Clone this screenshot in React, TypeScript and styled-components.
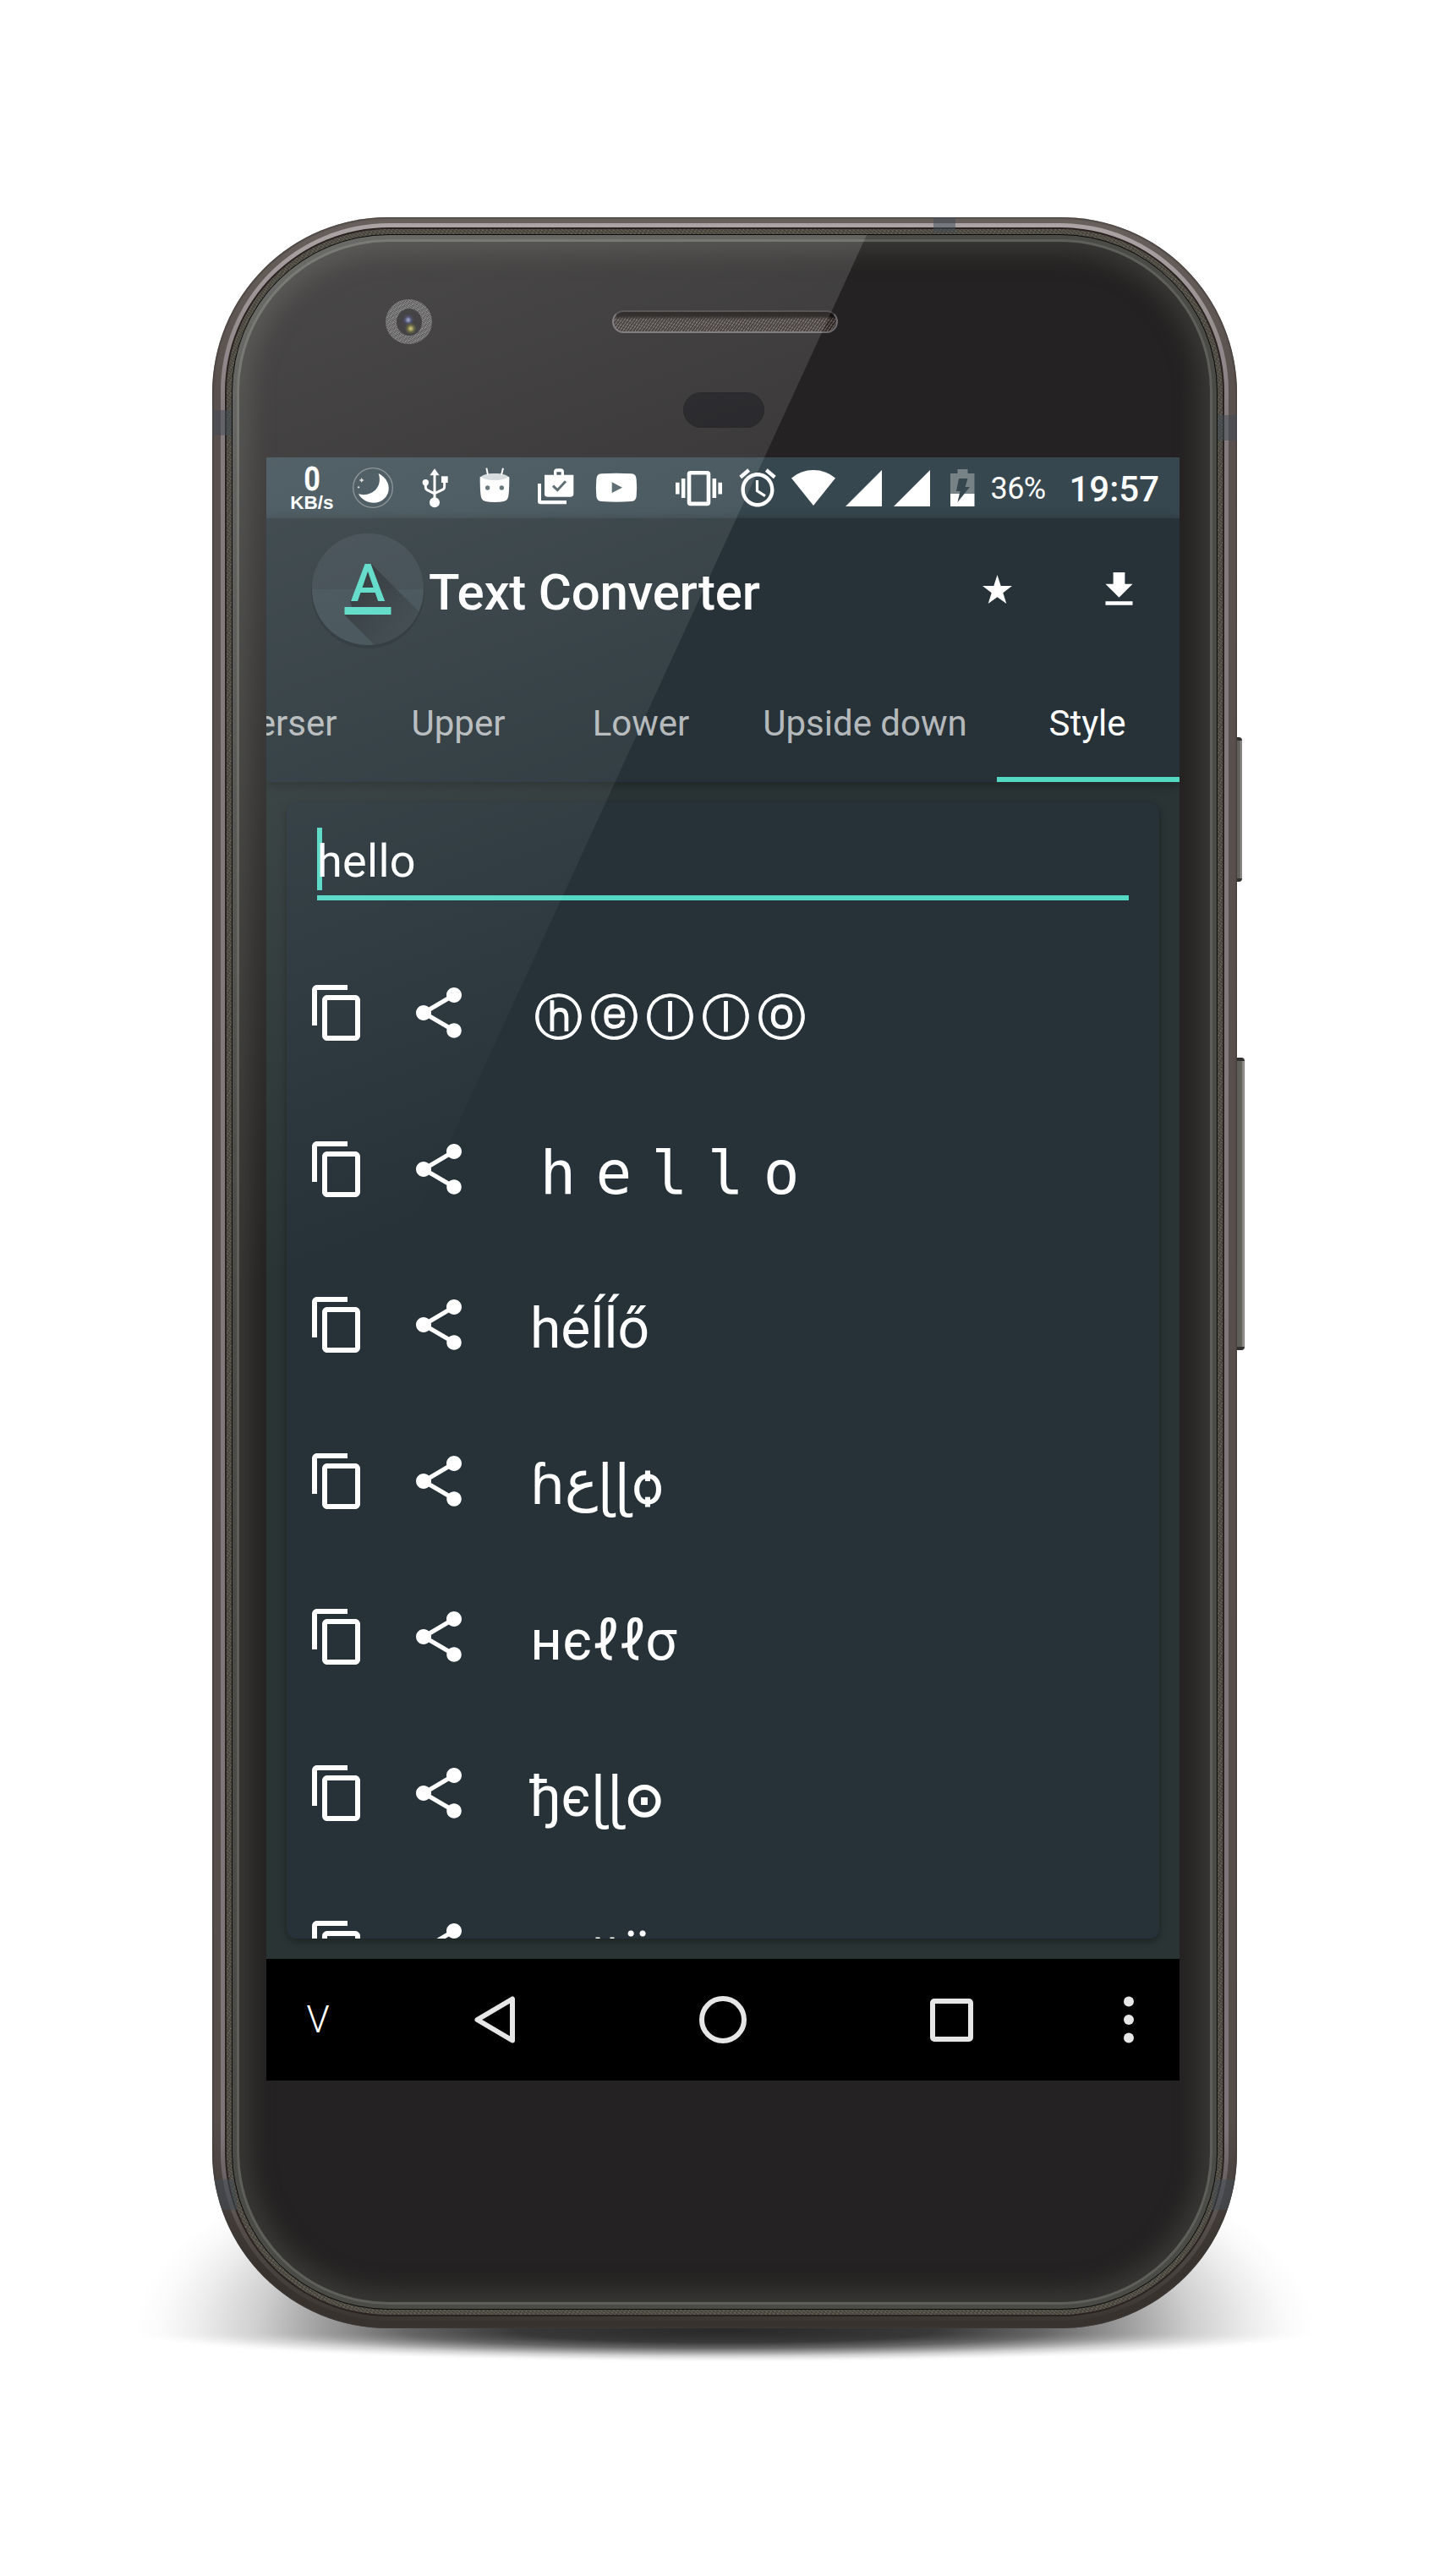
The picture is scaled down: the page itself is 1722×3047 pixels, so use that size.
import React from "react";
import styled, { createGlobalStyle } from "styled-components";

const ACCENT = "#53d8c4";

const GlobalStyle = createGlobalStyle`
  *, *::before, *::after { box-sizing: border-box; }
  html, body { margin: 0; padding: 0; background: #fff; }
  body { font-family: Roboto, "Noto Sans", "DejaVu Sans", sans-serif; color: #fff; }
  svg { display: block; flex: none; }
`;

/* ---------- device ---------- */

const Stage = styled.main`
  width: 1722px;
  height: 3047px;
  padding: 257px 0 0 251px;
  overflow: hidden;
  background: #fff;
`;

const Device = styled.div`
  position: relative;
  width: 1212px;
  height: 2497px;
`;

const GroundShadow = styled.div`
  position: absolute;
  left: -94px;
  width: 1400px;
`;

const shadowStops =
  "rgba(0,0,0,.84) 0%, rgba(0,0,0,.78) 35%, rgba(0,0,0,.6) 54%, rgba(0,0,0,.38) 68%, rgba(0,0,0,.19) 79%, rgba(0,0,0,.07) 89%, rgba(0,0,0,.02) 95%, transparent 100%";

const ShadowAbove = styled(GroundShadow)`
  bottom: -4px;
  height: 270px;
  background: radial-gradient(ellipse 700px 270px at 50% 100%, ${shadowStops});
`;

const ShadowBelow = styled(GroundShadow)`
  bottom: -40px;
  height: 36px;
  background: radial-gradient(ellipse 700px 36px at 50% 0%, ${shadowStops});
`;

const SideButton = styled.div<{ $top: number; $height: number; $width: number }>`
  position: absolute;
  left: 1209px;
  top: ${(p) => p.$top}px;
  width: ${(p) => p.$width}px;
  height: ${(p) => p.$height}px;
  border-radius: 0 4px 4px 0;
  background: linear-gradient(90deg, #3a3735 0, #5d5e57 30%, #63645c 70%, #a09c9e 88%, #6c6869 100%);
  border-top: 4px solid #34322f;
  border-bottom: 4px solid #34322f;
`;

const Rail = styled.div`
  position: relative;
  width: 1212px;
  height: 2497px;
  padding: 7px 10px 9px;
  border-radius: 208px;
  overflow: hidden;
  background: linear-gradient(180deg, #67605c 0, #5a514e 8%, #564d4b 90%, #38332f 97%, #37322e 100%);
  box-shadow: inset 0 0 2px 1px #3f3936;
`;

const Highlight = styled.div`
  height: 100%;
  padding: 5px;
  border-radius: 199px;
  background: linear-gradient(180deg, #aaa5a4 0, #857c7f 9%, #7e757a 91%, #504b48 96%, #3a3632 100%);
`;

const Groove = styled.div`
  height: 100%;
  padding: 2px;
  border-radius: 194px;
  background: #2a2220;
`;

const Texture = styled.div`
  height: 100%;
  padding: 6px;
  border-radius: 192px;
  background:
    repeating-linear-gradient(37deg, rgba(255,255,240,.06) 0 1px, rgba(0,0,0,.1) 1px 3px),
    repeating-linear-gradient(121deg, rgba(255,255,240,.05) 0 1px, rgba(0,0,0,.08) 1px 4px),
    #56534a;
`;

const Face = styled.div`
  position: relative;
  height: 100%;
  border-radius: 186px;
  overflow: hidden;
  background: #242222;
  border: 1px solid #0e0c0b;
  box-shadow: inset 0 0 0 5px #4a4a47, inset 0 0 0 8px #5e5e5a, inset 0 0 26px 22px #393836;
  padding: 263px 0 0 40px;
`;

const Antenna = styled.div<{ $x: number; $y: number; $w: number; $h: number; $skew?: number }>`
  position: absolute;
  left: ${(p) => p.$x}px;
  top: ${(p) => p.$y}px;
  width: ${(p) => p.$w}px;
  height: ${(p) => p.$h}px;
  transform: skewX(${(p) => p.$skew ?? 0}deg);
  background: rgba(66, 76, 86, 0.5);
`;

const Gloss = styled.div`
  position: absolute;
  left: 0;
  top: 0;
  width: 750px;
  height: 1631px;
  pointer-events: none;
  clip-path: polygon(0 0, 100% 0, 0 100%);
  background: linear-gradient(160deg, rgba(255,255,255,.18) 0, rgba(255,255,255,0) 1180px);
`;

/* ---------- sensors laid over the bezel ---------- */

const Camera = styled.div`
  position: absolute;
  left: 181px;
  top: 76px;
  width: 55px;
  height: 53px;
  border-radius: 50%;
  display: grid;
  place-items: center;
  background:
    repeating-linear-gradient(37deg, rgba(255,255,255,.12) 0 1px, rgba(0,0,0,.12) 1px 2px),
    repeating-linear-gradient(120deg, rgba(255,255,255,.1) 0 1px, rgba(0,0,0,.1) 1px 3px),
    #565454;
`;

const Lens = styled.div`
  width: 30px;
  height: 32px;
  border-radius: 50%;
  background:
    radial-gradient(circle at 56% 74%, #b9ad5c 0 1px, #4c4a22 4px, transparent 7px),
    radial-gradient(circle at 46% 42%, #8088b5 0 1px, #2c2f4c 4px, transparent 7px),
    #232124;
`;

const Speaker = styled.div`
  position: absolute;
  left: 449px;
  top: 89px;
  width: 267px;
  height: 27px;
  border-radius: 14px;
  border: 2px solid #6f6c70;
  border-top-color: #3f3c3e;
  background:
    linear-gradient(180deg, #0e0b09 0, #15110f 5px, transparent 9px),
    repeating-linear-gradient(125deg, #655f5c 0 1px, #322b29 1px 3px);
`;

const Proximity = styled.div`
  position: absolute;
  left: 533px;
  top: 186px;
  width: 96px;
  height: 42px;
  border-radius: 21px;
  background: #0f0f13;
  border: 1px solid #0c0b0d;
`;

/* ---------- screen ---------- */

const Screen = styled.div`
  width: 1080px;
  height: 1920px;
  display: flex;
  flex-direction: column;
  overflow: hidden;
  background: #2a3434;
`;

const StatusBar = styled.div`
  height: 72px;
  flex: none;
  display: flex;
  align-items: center;
  padding-left: 18px;
  background: #37474f;
`;

const Speed = styled.div`
  width: 72px;
  height: 72px;
  padding-top: 7px;
  display: flex;
  flex-direction: column;
  align-items: center;
  font-weight: 700;
`;

const SpeedValue = styled.span`
  font-size: 39px;
  line-height: 38px;
  font-weight: 500;
  -webkit-text-stroke: 0.8px #fff;
  transform: scaleX(0.86);
`;

const SpeedUnit = styled.span`
  font-family: "Liberation Sans", Arial, sans-serif;
  font-size: 22.5px;
  line-height: 18px;
`;

const StatusIcons = styled.div`
  display: flex;
  align-items: center;
  margin-left: 34px;
  & > svg { margin-right: 14px; }
`;

const Battery = styled.span`
  margin-left: 19px;
  font-size: 36px;
  line-height: 72px;
  letter-spacing: -0.6px;
  padding-top: 2px;
`;

const Clock = styled.span`
  margin-left: auto;
  padding: 3px 24px 0 0;
  font-size: 42px;
  line-height: 72px;
  font-weight: 500;
`;

const AppBar = styled.header`
  position: relative;
  height: 312px;
  flex: none;
  background: #263238;
  box-shadow: 0 2px 12px rgba(0, 0, 0, 0.35);
`;

const Toolbar = styled.div`
  height: 168px;
  display: flex;
  align-items: center;
  padding-left: 48px;
`;

const Title = styled.h1`
  margin: 0 auto 0 0;
  padding-top: 7px;
  font-size: 60px;
  line-height: 70px;
  font-weight: 500;
  letter-spacing: -0.25px;
  white-space: nowrap;
`;

const Action = styled.button`
  width: 144px;
  height: 144px;
  padding: 0;
  border: 0;
  background: none;
  display: grid;
  place-items: center;
  color: #fff;
`;

const Tabs = styled.nav`
  height: 144px;
  display: grid;
  grid-template-columns: 120px 216px 216px 312px 216px;
`;

const Tab = styled.div<{ $active?: boolean; $clipped?: boolean; $wide?: boolean }>`
  display: flex;
  align-items: center;
  justify-content: ${(p) => (p.$clipped ? "flex-end" : "center")};
  padding-right: ${(p) => (p.$clipped ? 36.5 : p.$wide ? 0 : 2)}px;
  padding-top: ${(p) => (p.$active ? 10 : 4)}px;
  overflow: hidden;
  white-space: nowrap;
  font-size: 42px;
  color: ${(p) => (p.$active ? "#fff" : "rgba(255,255,255,.68)")};
  border-bottom: ${(p) => (p.$active ? `6px solid ${ACCENT}` : "0")};
`;

const Content = styled.section`
  flex: 1;
  min-height: 0;
  padding: 24px;
`;

const Card = styled.div`
  height: 1344px;
  padding-top: 30px;
  border-radius: 12px;
  overflow: hidden;
  background: #263238;
`;

const CardShadow = styled.div`
  border-radius: 12px;
  box-shadow: 0 3px 9px rgba(0, 0, 0, 0.35);
`;

const Field = styled.div`
  height: 86px;
  margin: 0 36px 40.75px;
  display: flex;
  align-items: flex-start;
  border-bottom: 6px solid ${ACCENT};
  font-size: 54px;
  line-height: 76px;
`;

const Caret = styled.i`
  width: 6px;
  height: 74px;
  margin-right: -6px;
  background: ${ACCENT};
`;

const FieldText = styled.span`
  position: relative;
  padding-top: 2px;
  letter-spacing: 0.3px;
`;

const Row = styled.div`
  height: 184.5px;
  display: flex;
  align-items: center;
  padding-left: 24px;
  & > svg + svg { margin-left: 48px; }
`;

const Styled = styled.div`
  margin-left: 72px;
  padding-top: 10px;
  height: 90px;
  font-size: 66px;
  line-height: 80px;
  white-space: nowrap;
`;

const Circled = styled.span`
  display: grid;
  grid-template-columns: repeat(5, 66px);
  justify-items: center;
  font-family: "DejaVu Sans", sans-serif;
  font-size: 57px;
  line-height: 80px;
  -webkit-text-stroke: 1px #fff;
`;

const Wide = styled.span`
  font-family: "DejaVu Sans Mono", monospace;
  font-size: 71px;
  letter-spacing: 23.3px;
  padding-left: 11.5px;
`;

const Raised = styled.span`
  font-family: "DejaVu Sans", sans-serif;
  line-height: 0;
  vertical-align: 5px;
`;

const Tails = styled.span`
  letter-spacing: 3px;
`;

const Target = styled.span`
  font-family: "DejaVu Sans", sans-serif;
  font-size: 56px;
  line-height: 0;
  -webkit-text-stroke: 2px #fff;
`;

const Short = styled.span`
  font-size: 53.5px;
  letter-spacing: 4px;
`;

const NavBar = styled.footer`
  height: 144px;
  flex: none;
  display: grid;
  grid-template-columns: 135px 270px 270px 270px 135px;
  background: #000;
`;

const NavCell = styled.div<{ $left?: number; $right?: number }>`
  display: grid;
  place-items: center;
  padding-left: ${(p) => p.$left ?? 0}px;
  padding-right: ${(p) => p.$right ?? 0}px;
  font-size: 44px;
  font-weight: 300;
`;

/* ---------- drawings ---------- */

const Cell = ({ n, children }: { n: number; children: React.ReactNode }) => (
  <svg width="72" height="72" viewBox={`${270 + 216 * n} 0 216 216`} fill="#fff">
    {children}
  </svg>
);

const Notifications = () => (
  <>
    <Cell n={0}>
      <circle cx="378" cy="108" r="70" fill="none" stroke="#fff" strokeOpacity=".35" strokeWidth="4" />
      <path d="M398 57c38 18 48 62 22 88-26 27-74 20-93-15 44 12 88-22 71-73z" />
      <path d="M338 72l3 6 6 3-6 3-3 6-3-6-6-3 6-3zM327 102l5 4-5 4-4-4z" opacity=".8" />
    </Cell>
    <Cell n={1}>
      <path d="M597 40l17 24h-34z" />
      <circle cx="597" cy="160" r="18" />
      <circle cx="565" cy="89" r="11" />
      <path d="M621 67h23v23h-23z" />
      <path d="M597 60v90M565 90v16q0 8 8 11l24 12M632 88v16q0 8-8 11l-27 13" fill="none" stroke="#fff" strokeWidth="9" />
    </Cell>
    <Cell n={2}>
      <path d="M758 70q0 68 6 76 4 13 46 13t46-13q6-8 6-76-52-24-104 0z" />
      <ellipse cx="810" cy="69" rx="46" ry="12" fill="#d3d8da" />
      <path d="M781 38l5 24M840 38l-6 24" stroke="#fff" strokeWidth="6" fill="none" />
      <circle cx="785" cy="108" r="8" fill="#54666d" />
      <circle cx="835" cy="108" r="8" fill="#54666d" />
    </Cell>
    <Cell n={3}>
      <path d="M963 93h12v60h90v13h-92q-10 0-10-10z" />
      <path fillRule="evenodd" d="M987 62h33v-10q0-12 12-12h12q12 0 12 12v10h34v68q0 10-10 10h-83q-10 0-10-10zm43 0h16v-10h-16z" />
      <path d="M1017 101l16 15 29-31" fill="none" stroke="#4a5c63" strokeWidth="9" />
    </Cell>
    <Cell n={4}>
      <path d="M1188 58q54-4 108 0 16 1 17 20 3 30 0 60-1 17-17 18-54 4-108 0-16-1-17-18-3-30 0-60 1-19 17-20z" />
      <path d="M1226 88v38l37-19z" fill="#4a5c63" />
    </Cell>
  </>
);

const VibrationIcon = () => (
  <svg width="55" height="55" viewBox="0 0 24 24" fill="#fff" style={{ marginRight: 16 }}>
    <path d="M0 15h2V9H0v6zm3 2h2V7H3v10zm19-8v6h2V9h-2zm-3 8h2V7h-2v10zM16.5 3h-9C6.67 3 6 3.67 6 4.5v15c0 .83.67 1.5 1.5 1.5h9c.83 0 1.5-.67 1.5-1.5v-15c0-.83-.67-1.5-1.5-1.5zM16 19H8V5h8v14z" />
  </svg>
);

const AlarmIcon = () => (
  <svg width="52" height="54" viewBox="0 0 24 24" fill="#fff" preserveAspectRatio="none">
    <path d="M22 5.72l-4.6-3.86-1.29 1.53 4.6 3.86L22 5.72zM7.88 3.39L6.6 1.86 2 5.71l1.29 1.53 4.59-3.85zM12.5 8H11v6l4.75 2.85.75-1.23-4-2.37V8zM12 4c-4.97 0-9 4.03-9 9s4.02 9 9 9c4.97 0 9-4.03 9-9s-4.03-9-9-9zm0 16c-3.87 0-7-3.13-7-7s3.13-7 7-7 7 3.13 7 7-3.13 7-7 7z" />
  </svg>
);

const WifiIcon = () => (
  <svg width="52" height="42" viewBox="0 0 52 42" fill="#fff" style={{ marginRight: 11.5 }}>
    <path d="M26 42L0 9.500Q11 0 26 0t26 9.500z" />
  </svg>
);

const SignalIcon = ({ gap = 14 }: { gap?: number }) => (
  <svg width="43" height="43" viewBox="0 0 43 43" fill="#fff" style={{ marginRight: gap }}>
    <path d="M43 0v43H0z" />
  </svg>
);

const BatteryIcon = () => (
  <svg width="28.500" height="44" viewBox="0 0 28.500 44" style={{ marginRight: 0 }}>
    <path d="M8.500 0h12v5h8v24H0V5h8.500z" fill="#fff" opacity=".32" />
    <path d="M0 29h28.500v15H0z" fill="#fff" />
    <path d="M10 11h10.500l-3 10h5.500L8.500 39l3-13H7z" fill="#37474f" />
  </svg>
);

const Logo = () => (
  <svg width="144" height="144" viewBox="-6 -6 144 144">
    <defs>
      <clipPath id="disc">
        <circle cx="66" cy="66" r="66" />
      </clipPath>
      <linearGradient id="fall" x1="0" y1="0" x2="1" y2="1">
        <stop offset="0.15" stopColor="#1b2022" stopOpacity=".85" />
        <stop offset="0.85" stopColor="#2b363c" stopOpacity=".6" />
      </linearGradient>
    </defs>
    <circle cx="66" cy="69" r="67" fill="#000" opacity=".16" />
    <circle cx="66" cy="66" r="66" fill="#37464d" />
    <g clipPath="url(#disc)">
      <path d="M0 0h132v66H0z" fill="#333f46" />
      <path d="M70 36l60 60v40H78L38 96l10-6-3-10z" fill="url(#fall)" />
    </g>
    <path d="M38.500 87h55v9h-55z" fill={ACCENT} />
    <text x="66" y="80" textAnchor="middle" fontFamily="Roboto, sans-serif" fontWeight="500" fontSize="62" fill={ACCENT}>
      A
    </text>
  </svg>
);

const CopyIcon = () => (
  <svg width="72" height="72" viewBox="0 0 24 24" fill="#fff">
    <path d="M16 1H4c-1.100 0-2 .9-2 2v14h2V3h12V1zm3 4H8c-1.100 0-2 .9-2 2v14c0 1.100.9 2 2 2h11c1.100 0 2-.9 2-2V7c0-1.100-.9-2-2-2zm0 16H8V7h11v14z" />
  </svg>
);

const ShareIcon = () => (
  <svg width="72" height="72" viewBox="0 0 24 24" fill="#fff">
    <path d="M18 16.080c-.76 0-1.440.3-1.960.77L8.910 12.700c.05-.23.09-.46.09-.7s-.04-.47-.09-.7l7.050-4.110c.54.5 1.250.81 2.040.81 1.660 0 3-1.340 3-3s-1.340-3-3-3-3 1.340-3 3c0 .24.04.47.09.7L8.040 9.810C7.500 9.310 6.790 9 6 9c-1.660 0-3 1.340-3 3s1.340 3 3 3c.79 0 1.500-.31 2.040-.81l7.120 4.160c-.05.21-.08.43-.08.65 0 1.610 1.310 2.920 2.920 2.920 1.610 0 2.920-1.310 2.920-2.920s-1.310-2.920-2.920-2.920z" />
  </svg>
);

const StarIcon = () => (
  <svg width="35" height="34" viewBox="0 0 35 34" fill="#fff">
    <path d="M17.500 0l4.200 13H35L24.300 21.300 28.300 34 17.500 26.200 6.700 34l4-12.700L0 13h13.300z" />
  </svg>
);

const DownloadIcon = () => (
  <svg width="55" height="55" viewBox="0 0 24 24" fill="#fff">
    <path d="M19 9h-4V3H9v6H5l7 7 7-7zM5 18v2h14v-2H5z" />
  </svg>
);

const BackIcon = () => (
  <svg width="48" height="56" viewBox="0 0 48 56" fill="none" stroke="#e6e6e6" strokeWidth="6" strokeLinejoin="round">
    <path d="M45 3.500v49L3.500 28z" />
  </svg>
);

const HomeIcon = () => (
  <svg width="56" height="56" viewBox="0 0 56 56" fill="none" stroke="#e6e6e6" strokeWidth="6">
    <circle cx="28" cy="28" r="25" />
  </svg>
);

const RecentsIcon = () => (
  <svg width="51" height="51" viewBox="0 0 51 51" fill="none" stroke="#e6e6e6" strokeWidth="6">
    <rect x="3" y="3" width="45" height="45" rx="2" />
  </svg>
);

const MoreIcon = () => (
  <svg width="12" height="56" viewBox="0 0 12 56" fill="#e6e6e6">
    <circle cx="6" cy="6.500" r="6" />
    <circle cx="6" cy="28" r="6" />
    <circle cx="6" cy="49.500" r="6" />
  </svg>
);

/* ---------- data ---------- */

const results: React.ReactNode[] = [
  <Circled>
    {[..."ⓗⓔⓛⓛⓞ"].map((letter, i) => (
      <span key={i}>{letter}</span>
    ))}
  </Circled>,
  <Wide>hello</Wide>,
  "héĺĺő",
  <>ɦ<Raised>ع</Raised><Tails>ɭɭ</Tails>ѻ</>,
  "нєℓℓσ",
  <>ђє<Tails>ɭɭ</Tails><Target>⊙</Target></>,
  <>нє<Short>ll</Short>ö</>,
];

export default function App() {
  return (
    <Stage>
      <GlobalStyle />
      <Device>
        <ShadowAbove />
        <ShadowBelow />
        <SideButton $top={615} $height={171} $width={9} />
        <SideButton $top={994} $height={346} $width={12} />
        <Rail>
          <Highlight>
            <Groove>
              <Texture>
                <Face>
                  <Camera>
                    <Lens />
                  </Camera>
                  <Speaker />
                  <Proximity />
                  <Screen>
                    <StatusBar>
                      <Speed>
                        <SpeedValue>0</SpeedValue>
                        <SpeedUnit>KB/s</SpeedUnit>
                      </Speed>
                      <Notifications />
                      <StatusIcons>
                        <VibrationIcon />
                        <AlarmIcon />
                        <WifiIcon />
                        <SignalIcon />
                        <SignalIcon gap={24.5} />
                        <BatteryIcon />
                      </StatusIcons>
                      <Battery>36%</Battery>
                      <Clock>19:57</Clock>
                    </StatusBar>
                    <AppBar>
                      <Toolbar>
                        <Logo />
                        <Title>Text Converter</Title>
                        <Action aria-label="Favourites">
                          <StarIcon />
                        </Action>
                        <Action aria-label="Download">
                          <DownloadIcon />
                        </Action>
                      </Toolbar>
                      <Tabs>
                        <Tab $clipped>Reverser</Tab>
                        <Tab>Upper</Tab>
                        <Tab>Lower</Tab>
                        <Tab $wide>Upside down</Tab>
                        <Tab $active>Style</Tab>
                      </Tabs>
                    </AppBar>
                    <Content>
                      <CardShadow>
                        <Card>
                          <Field>
                            <Caret />
                            <FieldText>hello</FieldText>
                          </Field>
                          {results.map((text, i) => (
                            <Row key={i}>
                              <CopyIcon />
                              <ShareIcon />
                              <Styled>{text}</Styled>
                            </Row>
                          ))}
                        </Card>
                      </CardShadow>
                    </Content>
                    <NavBar>
                      <NavCell $right={13}>V</NavCell>
                      <NavCell>
                        <BackIcon />
                      </NavCell>
                      <NavCell>
                        <HomeIcon />
                      </NavCell>
                      <NavCell>
                        <RecentsIcon />
                      </NavCell>
                      <NavCell $left={15}>
                        <MoreIcon />
                      </NavCell>
                    </NavBar>
                  </Screen>
                  <Gloss />
                </Face>
              </Texture>
            </Groove>
          </Highlight>
          <Antenna $x={0} $y={228} $w={23} $h={30} />
          <Antenna $x={1189} $y={234} $w={23} $h={30} />
          <Antenna $x={853} $y={0} $w={26} $h={18} />
          <Antenna $x={2} $y={2321} $w={26} $h={36} $skew={8} />
          <Antenna $x={1184} $y={2321} $w={26} $h={36} $skew={-8} />
        </Rail>
      </Device>
    </Stage>
  );
}
